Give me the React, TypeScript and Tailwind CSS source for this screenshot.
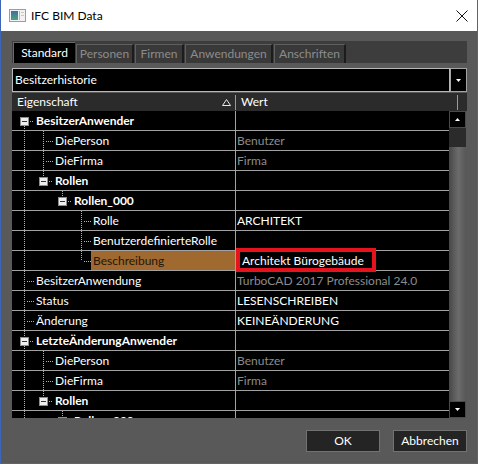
import React from "react";

type Row = {
  label: string;
  level: number;
  box?: boolean;
  bold?: boolean;
  value?: string;
  muted?: boolean;
  pass?: number[];
  top?: boolean;
  bottom?: boolean;
  selected?: boolean;
};

const rows: Row[] = [
  { label: "BesitzerAnwender", level: 0, box: true, bold: true, top: false, bottom: true },
  { label: "DiePerson", level: 1, pass: [0], top: true, bottom: true, value: "Benutzer", muted: true },
  { label: "DieFirma", level: 1, pass: [0], top: true, bottom: true, value: "Firma", muted: true },
  { label: "Rollen", level: 1, box: true, bold: true, pass: [0], top: true, bottom: false },
  { label: "Rollen_000", level: 2, box: true, bold: true, pass: [0], top: true, bottom: false },
  { label: "Rolle", level: 3, pass: [0], top: true, bottom: true, value: "ARCHITEKT" },
  { label: "BenutzerdefinierteRolle", level: 3, pass: [0], top: true, bottom: true },
  { label: "Beschreibung", level: 3, pass: [0], top: true, bottom: false, value: "Architekt Bürogebäude", selected: true },
  { label: "BesitzerAnwendung", level: 0, top: true, bottom: true, value: "TurboCAD 2017 Professional 24.0", muted: true },
  { label: "Status", level: 0, top: true, bottom: true, value: "LESENSCHREIBEN" },
  { label: "Änderung", level: 0, top: true, bottom: true, value: "KEINEÄNDERUNG" },
  { label: "LetzteÄnderungAnwender", level: 0, box: true, bold: true, top: true, bottom: true },
  { label: "DiePerson", level: 1, pass: [0], top: true, bottom: true, value: "Benutzer", muted: true },
  { label: "DieFirma", level: 1, pass: [0], top: true, bottom: true, value: "Firma", muted: true },
  { label: "Rollen", level: 1, box: true, bold: true, pass: [0], top: true, bottom: false },
  { label: "Rollen_000", level: 2, box: true, bold: true, pass: [0], top: true, bottom: false },
];

const DOT = "#b4b4b4";

function Connector({ r }: { r: Row }) {
  const L = r.level;
  const w = 22 + 19 * L;
  const cp = 12 + 19 * L;
  const c = cp + 0.5;
  return (
    <svg width={w} height={19} className="shrink-0 block">
      {(r.pass ?? []).map((k) => (
        <line key={k} x1={12 + 19 * k + 0.5} y1={0} x2={12 + 19 * k + 0.5} y2={19} stroke={DOT} strokeDasharray="1 1" />
      ))}
      {r.top && <line x1={c} y1={0} x2={c} y2={r.box ? 6 : 10} stroke={DOT} strokeDasharray="1 1" />}
      {r.bottom && <line x1={c} y1={r.box ? 15 : 10} x2={c} y2={19} stroke={DOT} strokeDasharray="1 1" />}
      <line x1={cp + (r.box ? 6 : 3)} y1={10.5} x2={w} y2={10.5} stroke={DOT} strokeDasharray="1 1" />
      {r.box && (
        <g>
          <rect x={c - 4} y={6.5} width={8} height={8} fill="#eeeeee" stroke="#8c8c8c" />
          <line x1={cp - 2} y1={10.5} x2={cp + 3} y2={10.5} stroke="#23355f" />
        </g>
      )}
    </svg>
  );
}

function GridRow({ r }: { r: Row }) {
  return (
    <div className="flex h-[20px] shrink-0 border-b border-[#a2a2a2]">
      <div className="flex w-[223px] shrink-0">
        <Connector r={r} />
        <div
          className={
            "flex-1 h-[19px] pl-[2px] leading-[19px] whitespace-nowrap overflow-hidden " +
            (r.selected ? "bg-[#a0692f] text-[#24170b]" : "text-white") +
            (r.bold ? " font-bold" : "")
          }
        >
          {r.label}
        </div>
      </div>
      <div className="relative flex-1 border-l border-[#a2a2a2] h-[19px] leading-[19px] whitespace-nowrap">
        {r.selected ? (
          <>
            <span className="pl-[6px] text-white">{r.value}</span>
            <div className="absolute left-0 top-[-3px] w-[140px] h-[24px] border-4 border-[#e5131d] pointer-events-none" />
          </>
        ) : (
          <span className={"pl-[1px] " + (r.muted ? "text-[#8c8c8c]" : "text-white")}>{r.value}</span>
        )}
      </div>
    </div>
  );
}

function Tri({ up }: { up?: boolean }) {
  return (
    <svg width={5} height={3} className="block">
      {up ? <polygon points="2.5,0 5,3 0,3" fill="#fff" /> : <polygon points="0,0 5,0 2.5,3" fill="#fff" />}
    </svg>
  );
}

export default function App() {
  const tabs = [
    { t: "Standard", w: "w-[62px]", active: true },
    { t: "Personen", w: "w-[58px]" },
    { t: "Firmen", w: "w-[49px]" },
    { t: "Anwendungen", w: "w-[88px]" },
    { t: "Anschriften", w: "w-[72px]" },
  ];
  return (
    <div className="w-[478px] h-[464px] flex flex-col border-x border-b border-[#3c67b9] bg-[#595959] font-['Lato','Liberation_Sans',sans-serif] text-[12px]">
      {/* title bar */}
      <div className="h-[31px] shrink-0 bg-white flex items-center pl-[8px] pr-[9px]">
        <svg width={17} height={13} className="block">
          <defs>
            <linearGradient id="ig" x1="0" y1="0" x2="0" y2="1">
              <stop offset="0" stopColor="#3d6fa8" />
              <stop offset="1" stopColor="#4aa57c" />
            </linearGradient>
          </defs>
          <rect x={0.5} y={0.5} width={16} height={12} fill="#f2f2f2" stroke="#9c9c9c" />
          <rect x={2} y={2} width={7} height={9} fill="url(#ig)" />
          <rect x={10} y={2} width={1} height={9} fill="#a9bccd" />
          <rect x={12} y={3} width={3} height={1} fill="#c8c8c8" />
          <rect x={12} y={6} width={3} height={1} fill="#c8c8c8" />
        </svg>
        <span className="ml-[5px] text-black text-[12px]">IFC BIM Data</span>
        <div className="flex-1" />
        <svg width={12} height={12} className="block">
          <path d="M0.5 0.5 L11.5 11.5 M11.5 0.5 L0.5 11.5" stroke="#111" strokeWidth={1} />
        </svg>
      </div>

      {/* body */}
      <div className="flex-1 flex flex-col pl-[11px] pr-[10px] pt-[10px]">
        {/* tabs */}
        <div className="h-[22px] shrink-0 bg-[#3d3d3d] flex items-end pl-[1px] gap-[1px]">
          {tabs.map((tb) =>
            tb.active ? (
              <div
                key={tb.t}
                className={tb.w + " h-[21px] bg-black border-t border-l border-[#6a6a6a] text-white flex items-center justify-center"}
              >
                {tb.t}
              </div>
            ) : (
              <div
                key={tb.t}
                className={
                  tb.w +
                  " h-[19px] bg-[#393939] border-t border-l border-[#5f5f5f] border-r-2 border-r-[#1c1c1c] text-[#8c8c8c] flex items-center justify-center"
                }
              >
                {tb.t}
              </div>
            )
          )}
        </div>

        {/* combo */}
        <div className="mt-[5px] h-[24px] shrink-0 flex">
          <div className="flex-1 border border-[#b8b8b8] bg-black flex items-center pl-[2px] text-white">
            Besitzerhistorie
          </div>
          <div className="w-[17px] border border-[#a4a4a4] bg-black flex items-center justify-center">
            <Tri />
          </div>
        </div>

        {/* header */}
        <div className="mt-[1px] h-[18px] shrink-0 bg-[#2b2b2b] flex items-center text-white">
          <div className="w-[223px] flex items-center pl-[5px] pr-[4px]">
            <span>Eigenschaft</span>
            <div className="flex-1" />
            <svg width={9} height={7} className="block">
              <polygon points="4.5,0.5 8.5,6.5 0.5,6.5" fill="none" stroke="#e8e8e8" />
            </svg>
          </div>
          <div className="w-px h-[15px] bg-[#9a9a9a]" />
          <div className="w-[221px] pl-[5px]">Wert</div>
          <div className="w-px h-[15px] bg-[#9a9a9a]" />
        </div>

        {/* grid */}
        <div className="h-[307px] shrink-0 flex">
          <div className="w-[437px] bg-black overflow-hidden flex flex-col">
            {rows.map((r, i) => (
              <GridRow key={i} r={r} />
            ))}
          </div>
          <div className="w-[17px] flex flex-col">
            <div className="h-[17px] bg-black border border-[#4a4a4a] flex items-center justify-center">
              <Tri up />
            </div>
            <div className="h-[19px] bg-[#2b2b2b]" />
            <div className="flex-1 bg-[linear-gradient(to_right,#474747,#6c6c6c_55%,#575757)]" />
            <div className="h-[17px] bg-black border border-[#4a4a4a] flex items-center justify-center">
              <Tri />
            </div>
          </div>
        </div>

        {/* buttons */}
        <div className="mt-[12px] flex justify-end gap-[13px]">
          <div className="w-[74px] h-[22px] bg-[#242424] border border-[#727272] text-white flex items-center justify-center">
            OK
          </div>
          <div className="w-[74px] h-[22px] bg-[#242424] border border-[#727272] text-white flex items-center justify-center">
            Abbrechen
          </div>
        </div>
      </div>
    </div>
  );
}
